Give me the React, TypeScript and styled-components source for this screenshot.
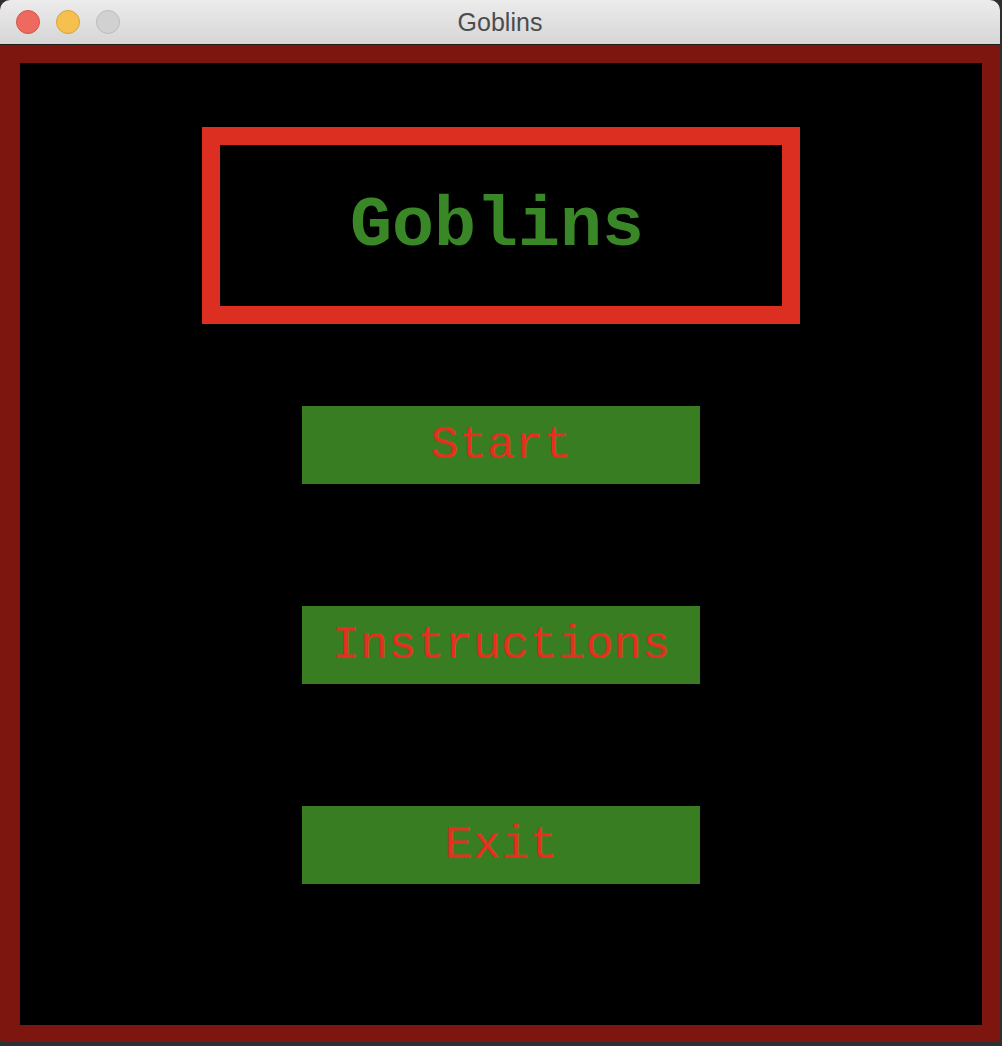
import React from 'react';
import styled, { createGlobalStyle } from 'styled-components';

const GlobalStyle = createGlobalStyle`
  html, body {
    margin: 0;
    padding: 0;
    background: #2e2f30;
  }
  * {
    box-sizing: border-box;
  }
`;

const Window = styled.div({
  width: '1000px',
  height: '1042px',
  display: 'flex',
  flexDirection: 'column',
  borderRadius: '10px 10px 4px 4px',
  overflow: 'hidden',
  background: '#7e1610',
});

const TitleBar = styled.div({
  position: 'relative',
  height: '45px',
  flexShrink: 0,
  display: 'flex',
  alignItems: 'center',
  justifyContent: 'center',
  background: 'linear-gradient(#ececec, #d6d6d6)',
  borderBottom: '1px solid #1e1e1e',
});

const Lights = styled.div({
  position: 'absolute',
  left: '16px',
  top: '10px',
  display: 'flex',
  gap: '16px',
});

const Light = styled.span<{ fill: string; edge: string }>`
  width: 24px;
  height: 24px;
  border-radius: 50%;
  background: ${(p) => p.fill};
  border: 1px solid ${(p) => p.edge};
`;

const WindowTitle = styled.span({
  fontFamily: '"Liberation Sans", Arial, sans-serif',
  fontSize: '25px',
  color: '#4c4c4c',
});

const Frame = styled.div({
  flex: 1,
  padding: '18px 18px 17px 20px',
  display: 'flex',
});

const Canvas = styled.main({
  flex: 1,
  background: '#000',
  display: 'flex',
  flexDirection: 'column',
  alignItems: 'center',
  paddingTop: '64px',
});

const TitleBox = styled.div({
  width: '598px',
  height: '197px',
  border: '18px solid #dc2e21',
  display: 'flex',
  alignItems: 'center',
  justifyContent: 'center',
  marginBottom: '82px',
});

const GameTitle = styled.h1({
  margin: 0,
  fontFamily: '"Courier New", "Liberation Mono", monospace',
  fontWeight: 700,
  fontSize: '70px',
  color: '#3a8727',
  transform: 'translate(-4px, 1px)',
});

const Menu = styled.nav({
  display: 'flex',
  flexDirection: 'column',
  gap: '122px',
});

const MenuButton = styled.button({
  width: '398px',
  height: '78px',
  border: 'none',
  background: '#387d22',
  color: '#e3301f',
  fontFamily: '"Courier New", "Liberation Mono", monospace',
  fontSize: '47px',
  padding: 0,
  cursor: 'pointer',
});

export default function App() {
  return (
    <>
      <GlobalStyle />
      <Window>
        <TitleBar>
          <Lights>
            <Light fill="#ee6a5e" edge="#d5544a" />
            <Light fill="#f6c04f" edge="#d9a23a" />
            <Light fill="#d1d1d1" edge="#bcbcbc" />
          </Lights>
          <WindowTitle>Goblins</WindowTitle>
        </TitleBar>
        <Frame>
          <Canvas>
            <TitleBox>
              <GameTitle>Goblins</GameTitle>
            </TitleBox>
            <Menu>
              <MenuButton>Start</MenuButton>
              <MenuButton>Instructions</MenuButton>
              <MenuButton>Exit</MenuButton>
            </Menu>
          </Canvas>
        </Frame>
      </Window>
    </>
  );
}
